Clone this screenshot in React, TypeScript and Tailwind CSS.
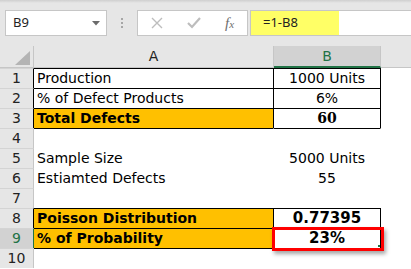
import React from "react";

type Row = {
  n: number;
  a?: string;
  b?: string;
  boxed?: boolean;
  topLine?: boolean;
  orange?: boolean;
  boldA?: boolean;
  bStyle?: "normal" | "serif" | "bold";
  selected?: boolean;
};

const rows: Row[] = [
  { n: 1, a: "Production", b: "1000 Units", boxed: true, topLine: true },
  { n: 2, a: "% of Defect Products", b: "6%", boxed: true, topLine: true },
  { n: 3, a: "Total Defects", b: "60", boxed: true, topLine: true, orange: true, boldA: true, bStyle: "serif" },
  { n: 4, topLine: true },
  { n: 5, a: "Sample Size", b: "5000 Units" },
  { n: 6, a: "Estiamted Defects", b: "55" },
  { n: 7 },
  { n: 8, a: "Poisson Distribution", b: "0.77395", boxed: true, topLine: true, orange: true, boldA: true, bStyle: "bold" },
  { n: 9, a: "% of Probability", b: "23%", boxed: true, topLine: true, orange: true, boldA: true, bStyle: "bold", selected: true },
  { n: 10, topLine: true },
];

function SheetRow({ r }: { r: Row }) {
  const top = r.topLine ? "border-t-black" : "border-t-white";
  const side = r.boxed ? "border-r-black" : "border-r-white";
  let bClass = "font-['DejaVu_Sans',sans-serif] text-[14px]";
  if (r.bStyle === "serif") bClass = "font-['DejaVu_Serif',serif] font-bold text-[14px]";
  if (r.bStyle === "bold") bClass = "font-['DejaVu_Sans',sans-serif] font-bold text-[15px]";

  return (
    <div className="flex h-[20px]">
      <div
        className={
          "w-[34px] shrink-0 border-t border-r border-t-[#d4d4d4] text-center text-[14px] leading-[19px] font-['DejaVu_Sans',sans-serif] " +
          (r.selected
            ? "bg-[#d2d2d2] text-[#217346] border-r-[#217346]"
            : "bg-[#e6e6e6] text-[#222] " + (r.boxed ? "border-r-black" : "border-r-[#c6c6c6]"))
        }
      >
        {r.n}
      </div>
      <div
        className={
          "w-[240px] shrink-0 border-t border-r pl-[3px] leading-[19px] text-black font-['DejaVu_Sans',sans-serif] text-[14px] " +
          top +
          " " +
          side +
          (r.orange ? " bg-[#ffc000]" : " bg-white") +
          (r.boldA ? " font-bold" : "")
        }
      >
        {r.a}
      </div>
      <div
        className={
          "w-[107px] shrink-0 border-t border-r bg-white text-center leading-[19px] text-black " +
          (r.selected ? "relative z-10 " : "") +
          top +
          " " +
          side +
          " " +
          bClass
        }
      >
        {r.b}
        {r.selected && (
          <div className="absolute -left-[2px] -top-[2px] w-[112px] h-[24px] border-[3px] border-[#ff0000] shadow-[2px_3px_4px_rgba(0,0,0,0.35)]">
            <div className="absolute right-[1px] bottom-[1px] w-[2px] h-[2px] bg-[#217346]" />
          </div>
        )}
      </div>
      <div className="flex-1 border-t border-t-white bg-white" />
    </div>
  );
}

export default function App() {
  return (
    <div className="w-[411px] h-[269px] overflow-hidden bg-white select-none">
      {/* formula bar */}
      <div className="relative h-[46px] bg-[#e6e6e6]">
        <div className="h-[3px] bg-gradient-to-b from-[#cfcfcf] to-[#e6e6e6]" />
        <div className="flex items-start pt-[7px]">
          <div className="ml-[5px] w-[102px] h-[26px] bg-white border border-[#c6c6c6] flex items-center pl-[7px] pr-[6px] justify-between">
            <span className="text-[13px] text-[#222] font-['Noto_Sans',sans-serif]">B9</span>
            <svg width="8" height="5" viewBox="0 0 8 5">
              <path d="M0 0 H8 L4 4.5 Z" fill="#6b6b6b" />
            </svg>
          </div>
          <div className="w-[30px] h-[26px] flex flex-col items-center justify-center gap-[2px]">
            <div className="w-[2px] h-[2px] bg-[#a6a6a6]" />
            <div className="w-[2px] h-[2px] bg-[#a6a6a6]" />
            <div className="w-[2px] h-[2px] bg-[#a6a6a6]" />
          </div>
          <div className="w-[111px] h-[26px] bg-white border border-[#c6c6c6] flex items-center">
            <svg className="ml-[13px]" width="12" height="12" viewBox="0 0 12 12">
              <path d="M1 1 L11 11 M11 1 L1 11" stroke="#bdbdbd" strokeWidth="1.4" fill="none" />
            </svg>
            <svg className="ml-[24px]" width="14" height="12" viewBox="0 0 14 12">
              <path d="M1 6 L5 10 L13 1" stroke="#bdbdbd" strokeWidth="2.2" fill="none" />
            </svg>
            <span className="ml-[24px] italic font-['Liberation_Serif',serif] text-[15px] text-[#6e6e6e] leading-none">
              f<span className="text-[11px]">x</span>
            </span>
          </div>
          <div className="flex-1 ml-[2px] h-[26px] bg-white border-y border-[#c6c6c6] flex">
            <div className="w-[89px] h-full bg-[#ffff66] border-l border-[#c6c6c6] pl-[12px] flex items-center">
              <span className="text-[13px] text-[#222] font-['Noto_Sans',sans-serif]">=1-B8</span>
            </div>
          </div>
        </div>
      </div>

      {/* column headers */}
      <div className="flex h-[22px] bg-[#e6e6e6] text-[14px] font-['DejaVu_Sans',sans-serif]">
        <div className="w-[34px] shrink-0 border-r border-b border-[#c6c6c6] flex items-end justify-end pr-[3px] pb-[2px]">
          <svg width="15" height="14" viewBox="0 0 15 14">
            <path d="M15 0 V14 H0 Z" fill="#b4b4b4" />
          </svg>
        </div>
        <div className="w-[240px] shrink-0 border-r border-b border-[#c6c6c6] text-center leading-[21px] text-[#222]">
          A
        </div>
        <div className="w-[107px] shrink-0 border-r border-b-2 border-r-[#c6c6c6] border-b-[#217346] bg-[#d2d2d2] text-center leading-[20px] text-[#217346]">
          B
        </div>
        <div className="flex-1 border-b border-[#c6c6c6]" />
      </div>

      {rows.map((r) => (
        <SheetRow key={r.n} r={r} />
      ))}
    </div>
  );
}
